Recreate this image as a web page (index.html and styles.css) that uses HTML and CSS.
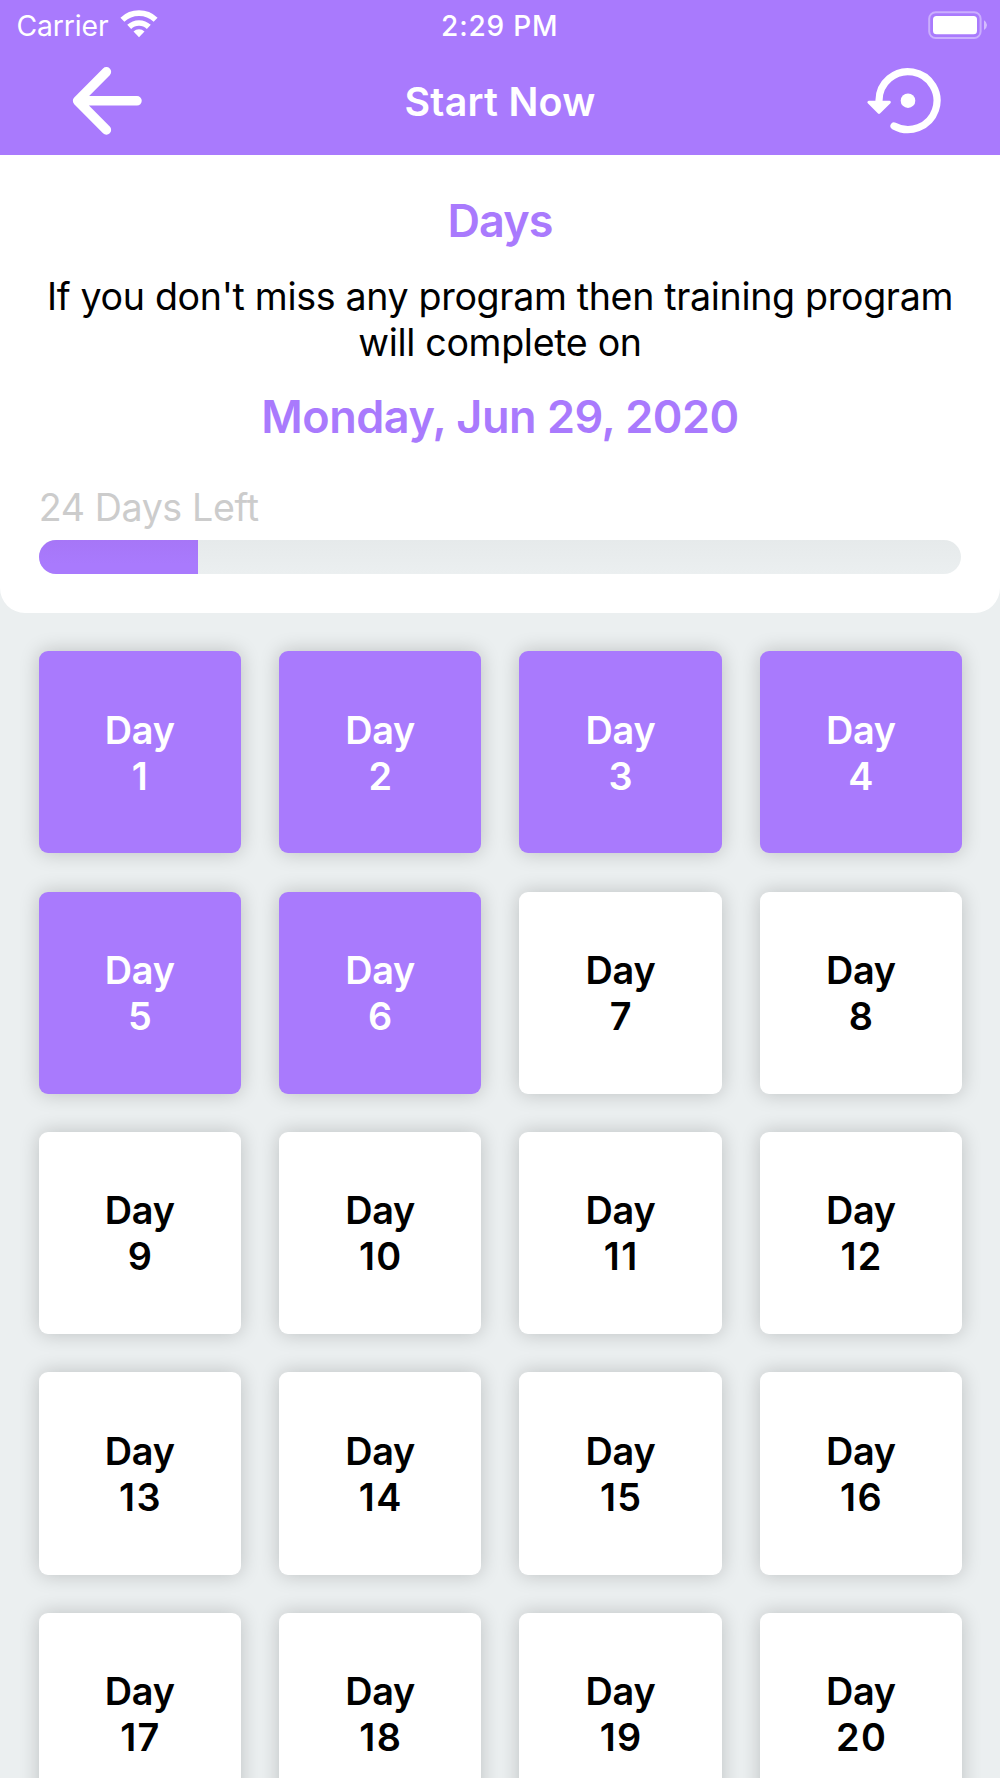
FILE: index.html
```html
<!DOCTYPE html>
<html lang="en">
<head>
<meta charset="utf-8">
<title>Start Now</title>
<link rel="stylesheet" href="styles.css">
</head>
<body>
<header class="header">
  <div class="status">
    <div class="status-left">
      <span class="carrier">Carrier</span>
      <svg class="wifi" width="38" height="28" viewBox="0 0 38 28">
        <g fill="none" stroke="#fff" stroke-width="5.7">
          <path d="M2.4 9.7A24.1 24.1 0 0 1 35.6 9.7"/>
          <path d="M9.2 16.9A14.2 14.2 0 0 1 28.8 16.9"/>
        </g>
        <path d="M19 27.2L13.5 21.4A8 8 0 0 1 24.5 21.4Z" fill="#fff"/>
      </svg>
    </div>
    <span class="time">2:29 PM</span>
    <svg class="battery" width="60" height="28" viewBox="0 0 60 28">
      <rect x="1.2" y="1.2" width="51.4" height="25.8" rx="6.5" fill="none" stroke="#fff" stroke-opacity=".4" stroke-width="2"/>
      <rect x="5" y="5" width="44" height="18.2" rx="3.5" fill="#fff"/>
      <path d="M56 9.2Q59 11 59 14T56 19Z" fill="#fff" fill-opacity=".5"/>
    </svg>
  </div>
  <nav class="nav">
    <svg width="72" height="72" viewBox="0 0 72 72" fill="none" stroke="#fff" stroke-width="9.5" stroke-linecap="round" stroke-linejoin="round">
      <path d="M36.4 6.8L7.6 35.8L36.4 64.9M7.6 35.8H67"/>
    </svg>
    <h1 class="title">Start Now</h1>
    <svg width="80" height="72" viewBox="0 0 80 72">
      <path d="M17 37V35.7A29 29 0 1 1 32 61" fill="none" stroke="#fff" stroke-width="7.2" stroke-linecap="round"/>
      <path d="M6.8 37.2H27.4L17 47.6Z" fill="#fff" stroke="#fff" stroke-width="2.8" stroke-linejoin="round"/>
      <circle cx="46" cy="35.7" r="7.3" fill="#fff"/>
    </svg>
  </nav>
</header>
<main>
  <section class="summary">
    <h2 class="heading days">Days</h2>
    <p class="note">If you don't miss any program then training program<br>will complete on</p>
    <p class="heading date">Monday, Jun 29, 2020</p>
    <p class="left">24 Days Left</p>
    <div class="bar"><div class="fill" style="width:17.3%"></div></div>
  </section>
  <section class="grid">
    <div class="card done">Day<b>1</b></div>
    <div class="card done">Day<b>2</b></div>
    <div class="card done">Day<b>3</b></div>
    <div class="card done">Day<b>4</b></div>
    <div class="card done">Day<b>5</b></div>
    <div class="card done">Day<b>6</b></div>
    <div class="card">Day<b>7</b></div>
    <div class="card">Day<b>8</b></div>
    <div class="card">Day<b>9</b></div>
    <div class="card">Day<b>10</b></div>
    <div class="card">Day<b>11</b></div>
    <div class="card">Day<b>12</b></div>
    <div class="card">Day<b>13</b></div>
    <div class="card">Day<b>14</b></div>
    <div class="card">Day<b>15</b></div>
    <div class="card">Day<b>16</b></div>
    <div class="card">Day<b>17</b></div>
    <div class="card">Day<b>18</b></div>
    <div class="card">Day<b>19</b></div>
    <div class="card">Day<b>20</b></div>
  </section>
</main>
</body>
</html>
```
FILE: styles.css
```css
* { box-sizing: border-box; margin: 0; padding: 0; }

body {
  height: 1778px;
  overflow: hidden;
  background: #ebeff0;
  font-family: Inter, "Liberation Sans", sans-serif;
  color: #000;
}

svg { display: block; }

.header {
  height: 154.5px;
  background: #a97afd;
  color: #fff;
}

.status {
  display: grid;
  grid-template-columns: 1fr auto 1fr;
  align-items: center;
  height: 50.4px;
  padding: 0 12px 0 16.5px;
}

.status-left { display: flex; align-items: center; gap: 11.3px; }
.carrier { padding-top: 1px; font-size: 28.3px; letter-spacing: -.1px; line-height: 50.4px; }
.wifi { margin-bottom: 3px; }
.time { margin-left: -5px; padding-top: 1px; font-size: 28px; font-weight: 500; letter-spacing: .82px; line-height: 50.4px; }
.battery { justify-self: end; margin-bottom: 2px; }

.nav {
  display: grid;
  grid-template-columns: 1fr auto 1fr;
  align-items: center;
  height: 102.6px;
  padding: 0 58px 0 70px;
}

.nav svg { margin-bottom: 1px; }
.nav svg:last-child { justify-self: end; }

.title {
  margin-left: -12px;
  font-size: 39.4px;
  font-weight: 600;
  letter-spacing: .25px;
  line-height: 48px;
}

.summary {
  height: 458.5px;
  padding: 39px 38.7px 0;
  background: #fff;
  border-radius: 0 0 25px 25px;
  text-align: center;
}

.heading {
  color: #a97afd;
  font-size: 45px;
  font-weight: 600;
  line-height: 54px;
}

.days { letter-spacing: -1px; }
.date { margin-top: 24.3px; letter-spacing: -.5px; }

.note {
  margin: 26.7px -20px 0;
  font-size: 37.6px;
  letter-spacing: -.33px;
  line-height: 46px;
}

.left {
  margin-top: 41px;
  color: #ccc;
  font-size: 37.6px;
  letter-spacing: -.38px;
  line-height: 46px;
  text-align: left;
}

.bar {
  height: 34px;
  margin-top: 8.4px;
  overflow: hidden;
  border-radius: 17px;
  background: linear-gradient(#e6eaeb, #ebeff0);
}

.fill { height: 100%; background: linear-gradient(#a676f7, #a97afd 70%); }

.grid {
  display: grid;
  grid-template-columns: repeat(4, 202.2px);
  grid-auto-rows: 202.2px;
  gap: 38.2px;
  padding: 38.2px 38.7px 0;
}

.card {
  padding-top: 55.5px;
  border-radius: 9px;
  background: #fff;
  box-shadow: 0 0 20px rgba(0, 0, 0, .2);
  font-size: 37.8px;
  font-weight: 600;
  letter-spacing: -.2px;
  line-height: 46px;
  text-align: center;
}

.card b {
  display: block;
  margin-right: -1.4px;
  font-weight: 600;
  letter-spacing: 1.4px;
}

.done { background: #a97afd; color: #fff; }
```
